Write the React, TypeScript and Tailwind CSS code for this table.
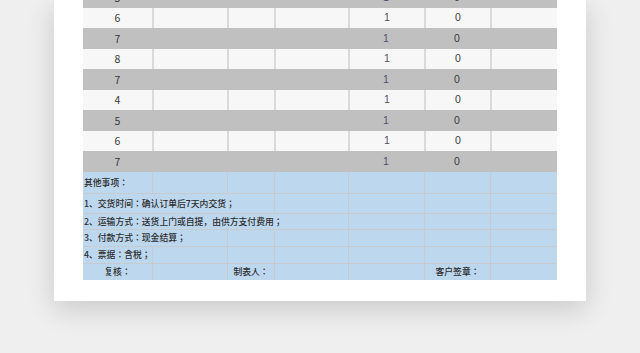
import React from "react";

const cols = "grid grid-cols-[69px_75px_47px_74px_76px_66px_67px]";
const cjk = { fontFamily: '"Microsoft YaHei","Noto Sans CJK JP",sans-serif' };
const lat = { fontFamily: '"Liberation Sans",Arial,sans-serif' };

const rows: { v: string; gray: boolean; h: string }[] = [
  { v: "5", gray: true, h: "h-[21px]" },
  { v: "6", gray: false, h: "h-[20px]" },
  { v: "7", gray: true, h: "h-[21px]" },
  { v: "8", gray: false, h: "h-[20px]" },
  { v: "7", gray: true, h: "h-[21px]" },
  { v: "4", gray: false, h: "h-[20px]" },
  { v: "5", gray: true, h: "h-[21px]" },
  { v: "6", gray: false, h: "h-[20px]" },
  { v: "7", gray: true, h: "h-[21px]" },
];

function DataRow({ v, gray, h }: { v: string; gray: boolean; h: string }) {
  const bg = gray ? "bg-[#c0c0c0]" : "bg-[#f7f7f7]";
  const line = gray ? "" : "border-l-2 border-[#dadada]";
  return (
    <div className={`${cols} ${h} ${bg} text-[10.5px] text-[#3a3a3a]`}>
      <div className="flex items-center justify-center" style={cjk}>{v}</div>
      <div className={line} />
      <div className={line} />
      <div className={line} />
      <div className={`${line} flex items-center justify-center text-[#50506a]`} style={lat}>1</div>
      <div className={`${line} flex items-center justify-center`} style={lat}>0</div>
      <div className={line} />
    </div>
  );
}

const bl = "border-l border-[#c7cbd0]";

function NoteRow({ text, span, h }: { text: string; span: number; h: string }) {
  const spanCls = ["", "col-span-1", "col-span-2", "col-span-3", "col-span-4"][span];
  const rest = 7 - span;
  return (
    <div className={`${cols} ${h} bg-[#bdd7ee] border-t border-[#c7cbd0]`}>
      <div className={`${spanCls} flex items-center pl-[1px] whitespace-nowrap text-[8.8px] font-medium text-[#2e2e2e]`} style={cjk}>
        {text}
      </div>
      {Array.from({ length: rest }).map((_, i) => (
        <div key={i} className={bl} />
      ))}
    </div>
  );
}

export default function App() {
  return (
    <div className="w-[640px] h-[353px] bg-[#efefef] overflow-hidden">
      <div className="ml-[54px] w-[532px] h-[301px] bg-white shadow-[0_8px_26px_rgba(0,0,0,0.16)] overflow-hidden">
        <div className="ml-[29px] w-[474px] mt-[-13px]">
          {rows.map((r, i) => (
            <DataRow key={i} {...r} />
          ))}
          <div className={`${cols} h-[21px] bg-[#bdd7ee]`}>
            <div className="flex items-center pl-[1px] whitespace-nowrap text-[8.8px] font-medium text-[#2e2e2e]" style={cjk}>其他事项：</div>
            {Array.from({ length: 6 }).map((_, i) => (
              <div key={i} className={bl} />
            ))}
          </div>
          <NoteRow text="1、交货时间：确认订单后7天内交货；" span={3} h="h-[20px]" />
          <NoteRow text="2、运输方式：送货上门或自提，由供方支付费用；" span={4} h="h-[16px]" />
          <NoteRow text="3、付款方式：现金结算；" span={2} h="h-[17px]" />
          <NoteRow text="4、票据：含税；" span={1} h="h-[17px]" />
          <div className={`${cols} h-[17px] bg-[#bdd7ee] border-t border-[#c7cbd0] text-[8.8px] font-medium text-[#2e2e2e]`} style={cjk}>
            <div className="flex items-center justify-center whitespace-nowrap">复核：</div>
            <div className={bl} />
            <div className={`${bl} flex items-center justify-center whitespace-nowrap`}>制表人：</div>
            <div className={bl} />
            <div className={bl} />
            <div className={`${bl} flex items-center justify-center whitespace-nowrap`}>客户签章：</div>
            <div className={bl} />
          </div>
        </div>
      </div>
    </div>
  );
}
